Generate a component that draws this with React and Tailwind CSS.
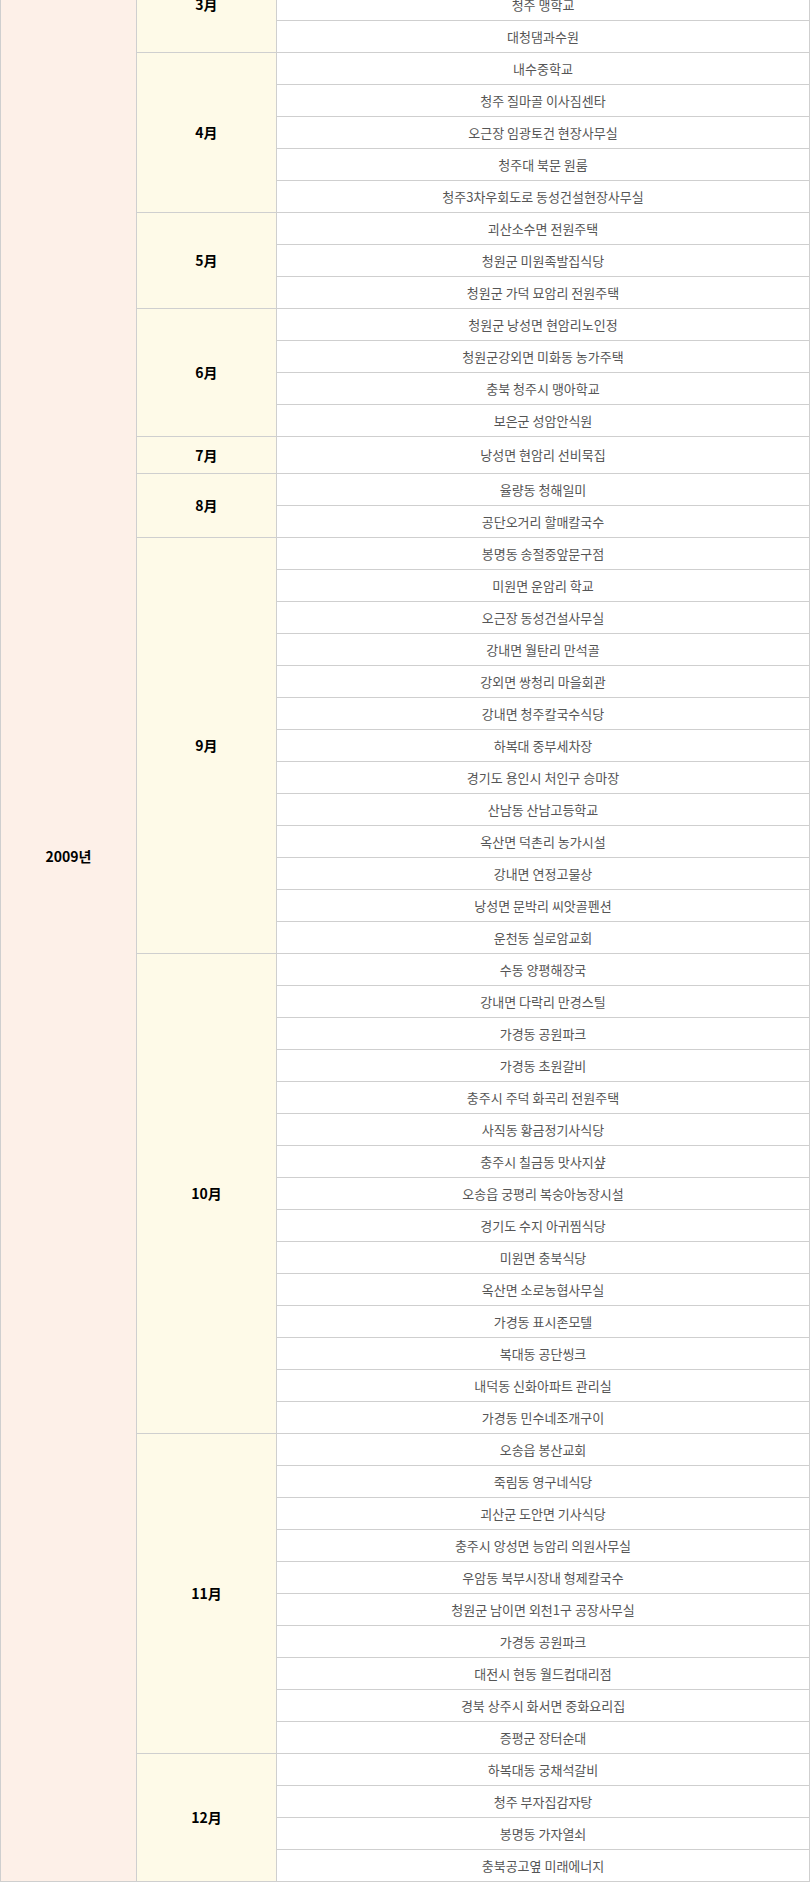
import React from "react";

const months = [
  { m: "3月", rows: ["", "청주 맹학교", "대청댐과수원"] },
  {
    m: "4月",
    rows: [
      "내수중학교",
      "청주 질마골 이사짐센타",
      "오근장 임광토건 현장사무실",
      "청주대 북문 원룸",
      "청주3차우회도로 동성건설현장사무실",
    ],
  },
  { m: "5月", rows: ["괴산소수면 전원주택", "청원군 미원족발집식당", "청원군 가덕 묘암리 전원주택"] },
  {
    m: "6月",
    rows: ["청원군 낭성면 현암리노인정", "청원군강외면 미화동 농가주택", "충북 청주시 맹아학교", "보은군 성암안식원"],
  },
  { m: "7月", rows: ["낭성면 현암리 선비묵집"], tall: true },
  { m: "8月", rows: ["율량동 청해일미", "공단오거리 할매칼국수"] },
  {
    m: "9月",
    rows: [
      "봉명동 송절중앞문구점",
      "미원면 운암리 학교",
      "오근장 동성건설사무실",
      "강내면 월탄리 만석골",
      "강외면 쌍청리 마을회관",
      "강내면 청주칼국수식당",
      "하복대 중부세차장",
      "경기도 용인시 처인구 승마장",
      "산남동 산남고등학교",
      "옥산면 덕촌리 농가시설",
      "강내면 연정고물상",
      "낭성면 문박리 씨앗골펜션",
      "운천동 실로암교회",
    ],
  },
  {
    m: "10月",
    rows: [
      "수동 양평해장국",
      "강내면 다락리 만경스틸",
      "가경동 공원파크",
      "가경동 초원갈비",
      "충주시 주덕 화곡리 전원주택",
      "사직동 황금정기사식당",
      "충주시 칠금동 맛사지샾",
      "오송읍 궁평리 복숭아농장시설",
      "경기도 수지 아귀찜식당",
      "미원면 충북식당",
      "옥산면 소로농협사무실",
      "가경동 표시존모텔",
      "복대동 공단씽크",
      "내덕동 신화아파트 관리실",
      "가경동 민수네조개구이",
    ],
  },
  {
    m: "11月",
    rows: [
      "오송읍 봉산교회",
      "죽림동 영구네식당",
      "괴산군 도안면 기사식당",
      "충주시 앙성면 능암리 의원사무실",
      "우암동 북부시장내 형제칼국수",
      "청원군 남이면 외천1구 공장사무실",
      "가경동 공원파크",
      "대전시 현동 월드컵대리점",
      "경북 상주시 화서면 중화요리집",
      "증평군 장터순대",
    ],
  },
  { m: "12月", rows: ["하복대동 궁채석갈비", "청주 부자집감자탕", "봉명동 가자열쇠", "충북공고옆 미래에너지"] },
];

const font = { fontFamily: '"Noto Sans CJK KR", "Noto Sans", sans-serif' };

export default function App() {
  return (
    <div className="h-[1884px] w-[810px] overflow-hidden bg-white" style={font}>
      {/* 표 위쪽은 스크롤로 잘린 상태 */}
      <div className="-mt-[43px] flex">
        <div className="flex w-[137px] shrink-0 items-center justify-center border-x border-b border-[#cfcfcf] bg-[#fdf0e8] pb-[126px] text-[14px] font-bold text-black">
          2009년
        </div>
        <div className="flex-1">
          {months.map((g) => (
            <MonthGroup key={g.m} {...g} />
          ))}
        </div>
      </div>
    </div>
  );
}

function MonthGroup({ m, rows, tall }) {
  return (
    <div className="flex">
      <div className="flex w-[140px] shrink-0 items-center justify-center border-r border-b border-[#cfcfcf] bg-[#fefae8] text-[14px] font-bold text-black">
        {m}
      </div>
      <div className="flex-1">
        {rows.map((r, i) => (
          <div
            key={i}
            className={
              (tall ? "h-[37px] " : "h-[32px] ") +
              "flex items-center justify-center border-r border-b border-[#cfcfcf] text-[13px] text-[#555]"
            }
          >
            {r}
          </div>
        ))}
      </div>
    </div>
  );
}
